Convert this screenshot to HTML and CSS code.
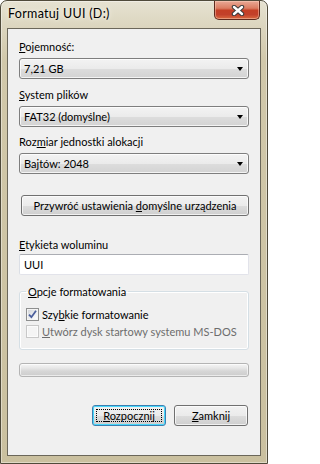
FILE: index.html
```html
<!DOCTYPE html>
<html lang="pl">
<head>
<meta charset="utf-8">
<title>Formatuj UUI (D:)</title>
<link rel="stylesheet" href="styles.css">
</head>
<body>
<div class="window">
  <div class="titlebar">
    <span class="title">Formatuj UUI (D:)</span>
    <div class="close">
      <svg width="14" height="11" viewBox="0 0 14 11">
        <path d="M3 2 L11 9 M11 2 L3 9" stroke="#3b3b3b" stroke-width="4.4" stroke-linecap="round"/>
        <path d="M3 2 L11 9 M11 2 L3 9" stroke="#ffffff" stroke-width="2.4" stroke-linecap="round"/>
      </svg>
    </div>
  </div>
  <div class="client">
    <div class="label"><u>P</u>ojemność:</div>
    <div class="combo c1"><span class="val">7,21 GB</span><span class="arrow"></span></div>
    <div class="label"><u>S</u>ystem plików</div>
    <div class="combo c2"><span class="val">FAT32 (domyślne)</span><span class="arrow"></span></div>
    <div class="label">Roz<u>m</u>iar jednostki alokacji</div>
    <div class="combo c3"><span class="val">Bajtów: 2048</span><span class="arrow"></span></div>
    <div class="btn wide"><span>Przywróć ustawienia <u>d</u>omyślne urządzenia</span></div>
    <div class="label lbl-vol"><u>E</u>tykieta woluminu</div>
    <div class="textbox">UUI</div>
    <fieldset class="group">
      <legend><u>O</u>pcje formatowania</legend>
      <div class="check-row">
        <span class="checkbox checked">
          <svg width="9" height="9" viewBox="0 0 9 9"><path d="M1 4.6 L3.4 7.2 L8 0.8" fill="none" stroke="#4a5e9c" stroke-width="1.8"/></svg>
        </span>
        <span>Szy<u>b</u>kie formatowanie</span>
      </div>
      <div class="check-row disabled">
        <span class="checkbox"></span>
        <span><u>U</u>twórz dysk startowy systemu MS-DOS</span>
      </div>
    </fieldset>
    <div class="progress"></div>
    <div class="actions">
      <div class="btn default"><span class="focus"><span><u>R</u>ozpocznij</span></span></div>
      <div class="btn"><span><u>Z</u>amknij</span></div>
    </div>
  </div>
</div>
</body>
</html>
```
FILE: styles.css
```css
* { box-sizing: border-box; }
html, body { margin: 0; padding: 0; }
body {
  width: 268px;
  height: 464px;
  overflow: hidden;
  background: #ffffff;
  font-family: Lato, "Liberation Sans", sans-serif;
  font-size: 11px;
  color: #000;
}
u { text-decoration: underline; text-underline-offset: 1px; }

.window {
  width: 268px;
  height: 464px;
  border: 1px solid #4f4a3a;
  border-radius: 7px 7px 0 0;
  background:
    linear-gradient(to bottom, #e6e2d2 0, #ddd7c1 22px, #d1c8aa 60px, #cac09f 100%);
  box-shadow: inset 0 0 0 1px rgba(255,255,255,0.4);
  padding: 0 6px 7px 6px;
  display: flex;
  flex-direction: column;
}

.titlebar {
  height: 27px;
  display: flex;
  align-items: flex-start;
}
.title {
  margin: 5px 0 0 1px;
  font-size: 12.5px;
  letter-spacing: 0.3px;
  line-height: 16px;
  color: #000;
  text-shadow: 0 0 6px #f6f3e8, 0 0 3px #f6f3e8;
}
.close {
  margin-left: auto;
  margin-right: 1px;
  width: 46px;
  height: 19px;
  border: 1px solid #5e2a1e;
  border-top: none;
  border-radius: 0 0 5px 5px;
  background: linear-gradient(to bottom, #e9a996 0%, #db7d62 40%, #c43f25 52%, #c2402a 75%, #d9693f 100%);
  box-shadow: inset 0 0 0 1px rgba(255,215,195,0.45);
  display: flex;
  align-items: center;
  justify-content: center;
}
.close svg { display: block; margin-left: 2px; }

.client {
  flex: 1;
  background: #f0f0f0;
  border: 1px solid #6b675a;
  padding: 10px 11px 0 11px;
  display: flex;
  flex-direction: column;
}

.label {
  line-height: 15px;
  height: 15px;
  margin-bottom: 4px;
  white-space: nowrap;
}
.lbl-vol { margin-bottom: 2px; }

.combo {
  height: 21px;
  border: 1px solid #7e7e7e;
  border-radius: 3px;
  background: linear-gradient(to bottom, #f3f3f3 0%, #ebebeb 50%, #dddddd 51%, #d3d3d3 100%);
  box-shadow: inset 0 0 0 1px rgba(255,255,255,0.75);
  display: flex;
  align-items: center;
  padding: 0 5px 0 4px;
  line-height: 15px;
}
.val { flex: 1; white-space: nowrap; }
.arrow {
  width: 0;
  height: 0;
  border-left: 3.5px solid transparent;
  border-right: 3.5px solid transparent;
  border-top: 4px solid #000;
  margin-top: 1px;
}
.c1 { margin-bottom: 8px; }
.c2 { margin-bottom: 7px; }
.c3 { margin-bottom: 21px; }

.btn {
  height: 21px;
  border: 1px solid #707070;
  border-radius: 3px;
  background: linear-gradient(to bottom, #f2f2f2 0%, #ebebeb 50%, #dddddd 51%, #cfcfcf 100%);
  box-shadow: inset 0 0 0 1px rgba(255,255,255,0.7);
  display: flex;
  align-items: center;
  justify-content: center;
  line-height: 15px;
  white-space: nowrap;
}
.wide {
  margin: 0 0 21px 2px;
}

.textbox {
  height: 21px;
  background: #fff;
  border: 1px solid #e2e3ea;
  border-top-color: #abadb3;
  border-left-color: #dbdfe6;
  border-radius: 2px;
  padding: 0 4px;
  line-height: 19px;
  margin-bottom: 9px;
}

.group {
  margin: 0;
  border: 1px solid #d5dfe5;
  border-radius: 3px;
  padding: 7px 0 9px 6px;
  box-shadow: inset 0 0 0 1px #ffffff;
}
.group legend {
  padding: 0 2px;
  line-height: 15px;
  margin-left: 0;
}
.check-row {
  height: 17px;
  display: flex;
  align-items: center;
  white-space: nowrap;
}
.checkbox {
  width: 13px;
  height: 13px;
  margin-right: 3px;
  border: 1px solid #8e8f8f;
  background: linear-gradient(135deg, #cfd2d7 0%, #eef0f2 60%, #ffffff 100%);
  box-shadow: inset 0 0 0 1px #f4f4f4;
  display: flex;
  align-items: center;
  justify-content: center;
}
.checkbox svg { display: block; }
.disabled { color: #6d6d6d; }
.disabled .checkbox {
  border-color: #c8c8c8;
  background: #f4f4f4;
  box-shadow: inset 0 0 0 1px #fbfbfb;
}

.progress {
  margin-top: 13px;
  height: 14px;
  border: 1px solid #b4b4b4;
  border-radius: 3px;
  background: linear-gradient(to bottom, #f6f6f6 0%, #e6e6e6 35%, #d6d6d6 60%, #cdcdcd 100%);
  box-shadow: inset 0 0 0 1px rgba(255,255,255,0.6);
}

.actions {
  margin-top: 28px;
  display: flex;
  justify-content: flex-end;
  gap: 8px;
  padding-right: 1px;
}
.actions .btn { width: 74px; }
.default {
  border-color: #3c7fb1;
  box-shadow: inset 0 0 0 1px #48d8fb;
  padding: 3px;
}
.focus {
  flex: 1;
  align-self: stretch;
  border: 1px dotted #000;
  display: flex;
  align-items: center;
  justify-content: center;
}
```
